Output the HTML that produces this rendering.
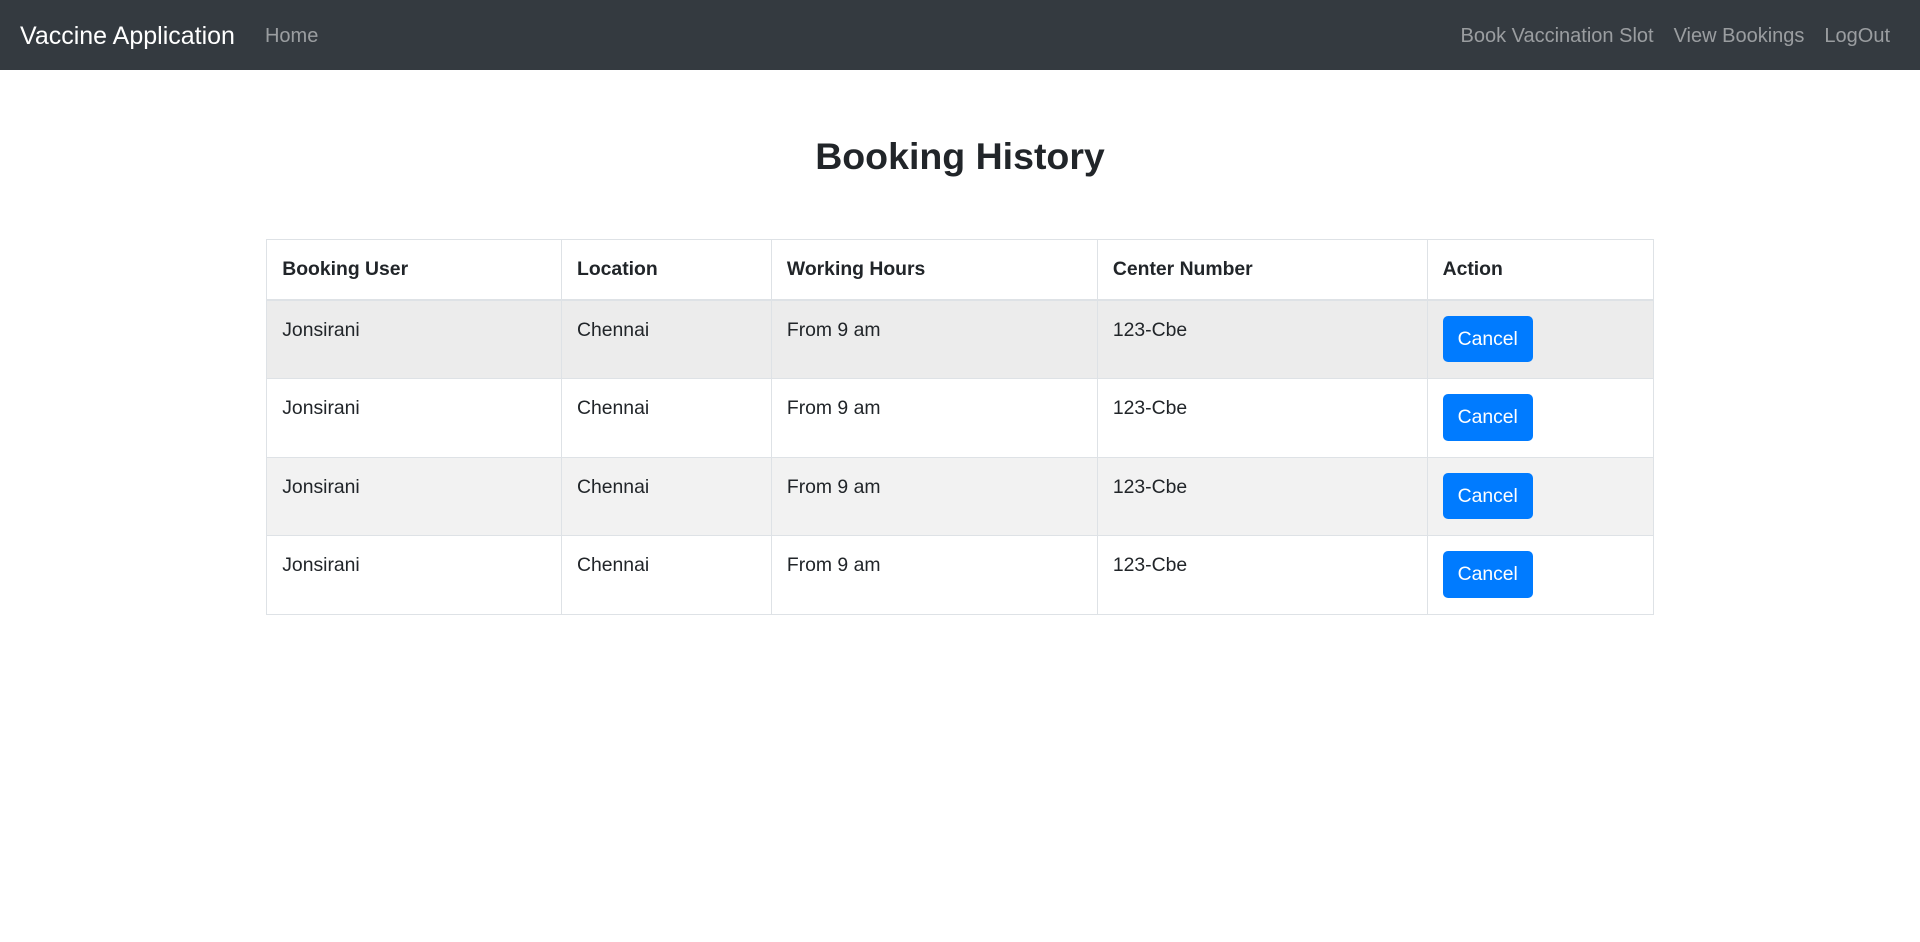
<!DOCTYPE html>
<html><head><meta charset="utf-8"><style>
html{zoom:1.25}
body{margin:0;font-family:"Liberation Sans",sans-serif;font-size:16px;color:#212529;background:#fff;line-height:1.5}
.nav{height:56px;background:#343a40;display:flex;align-items:center;padding:0 16px;box-sizing:border-box}
.brand{color:#fff;font-size:20px;margin-right:16px;white-space:nowrap;position:relative;top:1px}
.nav a{color:rgba(255,255,255,.5);padding:0 8px;text-decoration:none;white-space:nowrap;font-size:16px;position:relative;top:1px}
.sp{flex:1}
h2{text-align:center;font-weight:bold;font-size:30px;margin:51px 0 48px;line-height:1.2}
table{border-collapse:collapse;width:1110px;margin-left:213px}
td,th{border:1px solid #dee2e6;padding:12px;text-align:left;vertical-align:top}
td{height:38px;font-size:15.5px}
th{border-bottom:2px solid #dee2e6;font-weight:bold;font-size:15.5px}
.h{background:#ececec}.s{background:#f2f2f2}
.btn{display:inline-block;background:#007bff;color:#fff;border-radius:4px;padding:7px 12px;line-height:23px;font-size:15.5px}
</style></head><body>
<div class="nav"><span class="brand">Vaccine Application</span><a>Home</a><span class="sp"></span><a>Book Vaccination Slot</a><a>View Bookings</a><a>LogOut</a></div>
<h2>Booking History</h2>
<table>
<colgroup><col style="width:236px"><col style="width:168px"><col style="width:261px"><col style="width:264px"><col style="width:181px"></colgroup>
<tr><th>Booking User</th><th>Location</th><th>Working Hours</th><th>Center Number</th><th>Action</th></tr>
<tr class="h"><td>Jonsirani</td><td>Chennai</td><td>From 9 am</td><td>123-Cbe</td><td><span class="btn">Cancel</span></td></tr>
<tr><td>Jonsirani</td><td>Chennai</td><td>From 9 am</td><td>123-Cbe</td><td><span class="btn">Cancel</span></td></tr>
<tr class="s"><td>Jonsirani</td><td>Chennai</td><td>From 9 am</td><td>123-Cbe</td><td><span class="btn">Cancel</span></td></tr>
<tr><td>Jonsirani</td><td>Chennai</td><td>From 9 am</td><td>123-Cbe</td><td><span class="btn">Cancel</span></td></tr>
</table>
</body></html>
